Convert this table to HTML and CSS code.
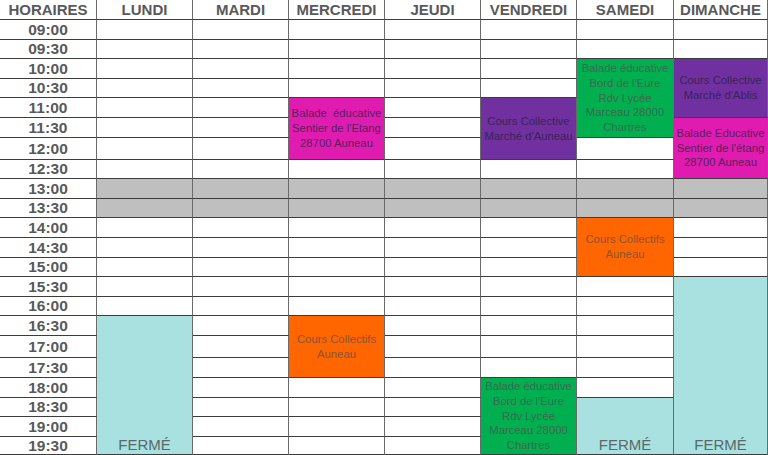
FILE: index.html
```html
<!DOCTYPE html>
<html lang="fr">
<head>
<meta charset="utf-8">
<title>Planning</title>
<link rel="stylesheet" href="styles.css">
</head>
<body>
<div class="sheet">
  <div class="c head">HORAIRES</div><div class="c head">LUNDI</div><div class="c head">MARDI</div><div class="c head">MERCREDI</div><div class="c head">JEUDI</div><div class="c head">VENDREDI</div><div class="c head">SAMEDI</div><div class="c head">DIMANCHE</div>

  <div class="c time">09:00</div><div class="c"></div><div class="c"></div><div class="c"></div><div class="c"></div><div class="c"></div><div class="c"></div><div class="c"></div>
  <div class="c time">09:30</div><div class="c"></div><div class="c"></div><div class="c"></div><div class="c"></div><div class="c"></div><div class="c"></div><div class="c"></div>

  <div class="c time">10:00</div><div class="c"></div><div class="c"></div><div class="c"></div><div class="c"></div><div class="c"></div>
  <div class="c ev green span4">Balade éducative<br>Bord de l'Eure<br>Rdv Lycée<br>Marceau 28000<br>Chartres</div>
  <div class="c ev purple span3">Cours Collective<br>Marché d'Ablis</div>

  <div class="c time">10:30</div><div class="c"></div><div class="c"></div><div class="c"></div><div class="c"></div><div class="c"></div>

  <div class="c time">11:00</div><div class="c"></div><div class="c"></div>
  <div class="c ev magenta span3">Balade&nbsp; éducative<br>Sentier de l'Etang<br>28700 Auneau</div>
  <div class="c"></div>
  <div class="c ev purple span3">Cours Collective<br>Marché d'Auneau</div>

  <div class="c time">11:30</div><div class="c"></div><div class="c"></div><div class="c"></div>
  <div class="c ev magenta span3">Balade Educative<br>Sentier de l'étang<br>28700 Auneau</div>

  <div class="c time">12:00</div><div class="c"></div><div class="c"></div><div class="c"></div><div class="c"></div>

  <div class="c time">12:30</div><div class="c"></div><div class="c"></div><div class="c"></div><div class="c"></div><div class="c"></div><div class="c"></div>

  <div class="c time">13:00</div><div class="c gray"></div><div class="c gray"></div><div class="c gray"></div><div class="c gray"></div><div class="c gray"></div><div class="c gray"></div><div class="c gray"></div>
  <div class="c time">13:30</div><div class="c gray"></div><div class="c gray"></div><div class="c gray"></div><div class="c gray"></div><div class="c gray"></div><div class="c gray"></div><div class="c gray"></div>

  <div class="c time">14:00</div><div class="c"></div><div class="c"></div><div class="c"></div><div class="c"></div><div class="c"></div>
  <div class="c ev orange span3">Cours Collectifs<br>Auneau</div>
  <div class="c"></div>

  <div class="c time">14:30</div><div class="c"></div><div class="c"></div><div class="c"></div><div class="c"></div><div class="c"></div><div class="c"></div>
  <div class="c time">15:00</div><div class="c"></div><div class="c"></div><div class="c"></div><div class="c"></div><div class="c"></div><div class="c"></div>

  <div class="c time">15:30</div><div class="c"></div><div class="c"></div><div class="c"></div><div class="c"></div><div class="c"></div><div class="c"></div>
  <div class="c closed teal span9">FERMÉ</div>

  <div class="c time">16:00</div><div class="c"></div><div class="c"></div><div class="c"></div><div class="c"></div><div class="c"></div><div class="c"></div>

  <div class="c time">16:30</div>
  <div class="c closed teal span7">FERMÉ</div>
  <div class="c"></div>
  <div class="c ev orange span3">Cours Collectifs<br>Auneau</div>
  <div class="c"></div><div class="c"></div><div class="c"></div>

  <div class="c time">17:00</div><div class="c"></div><div class="c"></div><div class="c"></div><div class="c"></div>
  <div class="c time">17:30</div><div class="c"></div><div class="c"></div><div class="c"></div><div class="c"></div>

  <div class="c time">18:00</div><div class="c"></div><div class="c"></div><div class="c"></div>
  <div class="c ev green span4">Balade éducative<br>Bord de l'Eure<br>Rdv Lycée<br>Marceau 28000<br>Chartres</div>
  <div class="c"></div>

  <div class="c time">18:30</div><div class="c"></div><div class="c"></div><div class="c"></div>
  <div class="c closed teal span3">FERMÉ</div>

  <div class="c time">19:00</div><div class="c"></div><div class="c"></div><div class="c"></div>
  <div class="c time">19:30</div><div class="c"></div><div class="c"></div><div class="c"></div>
</div>
</body>
</html>
```

FILE: styles.css
```css
html, body {
  margin: 0;
  padding: 0;
  background: #ffffff;
  overflow: hidden;
}

.sheet {
  display: grid;
  width: 768px;
  height: 455px;
  grid-template-columns: 97px 96px 96px 96px 96px 96px 97px 94px;
  grid-template-rows: 20px 20px 19px 20px 19px 20px 20px 22px 19px 20px 19px 20px 20px 19px 20px 19px 20px 22px 20px 20px 19px 20px 18px;
  font-family: "Liberation Sans", Arial, sans-serif;
  color: #595959;
}

.c {
  box-sizing: border-box;
  border-right: 1px solid #6a6a6a;
  border-bottom: 1px solid #3c3c3c;
  min-width: 0;
  min-height: 0;
}

.head {
  font-weight: bold;
  font-size: 15px;
  display: flex;
  align-items: center;
  justify-content: center;
  white-space: nowrap;
}

.time {
  font-weight: bold;
  font-size: 15.5px;
  display: flex;
  align-items: center;
  justify-content: center;
}

.ev {
  display: flex;
  flex-direction: column;
  align-items: center;
  justify-content: center;
  text-align: center;
  font-size: 11.3px;
  line-height: 14.7px;
  white-space: nowrap;
  overflow: visible;
}

.closed {
  display: flex;
  align-items: flex-end;
  justify-content: center;
  font-size: 15px;
  line-height: 17px;
  padding-bottom: 1px;
}

.span3 { grid-row: span 3; }
.span4 { grid-row: span 4; }
.span7 { grid-row: span 7; }
.span9 { grid-row: span 9; }

.gray { background: #bfbfbf; }
.teal { background: #a8e1df; color: #5a6a6a; }
.magenta { background: #e01cb0; color: #5c1d62; }
.purple { background: #7030a0; color: #3a2456; }
.green { background: #00b050; color: #3d6a4c; }
.orange { background: #ff6600; color: #8a5438; }
```
